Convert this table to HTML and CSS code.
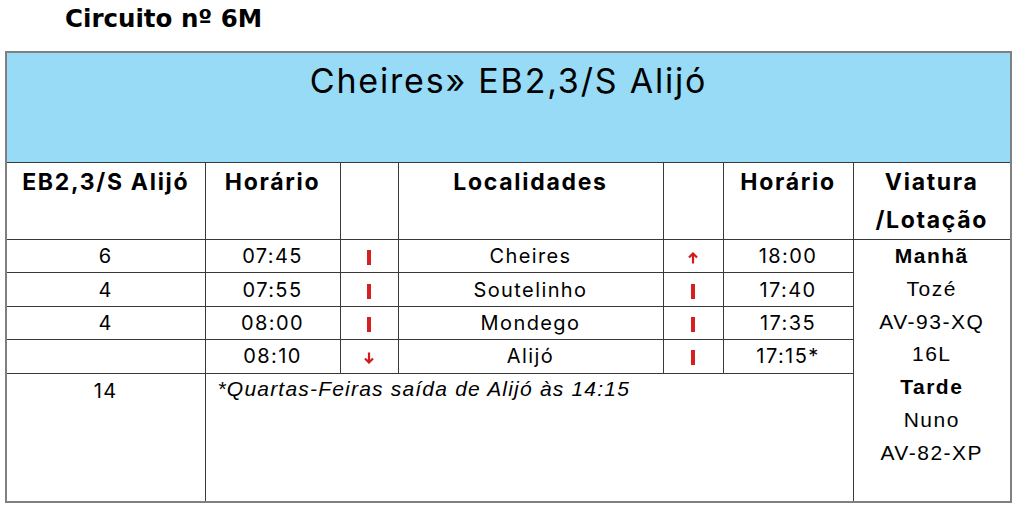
FILE: index.html
```html
<!DOCTYPE html>
<html lang="pt">
<head>
<meta charset="utf-8">
<title>Circuito nº 6M</title>
<link rel="stylesheet" href="styles.css">
</head>
<body>
<h1 class="circuit">Circuito nº 6M</h1>
<table class="route">
  <colgroup>
    <col class="c1"><col class="c2"><col class="c3"><col class="c4"><col class="c5"><col class="c6"><col class="c7">
  </colgroup>
  <tr class="title-row">
    <td colspan="7" class="title-cell">Cheires» EB2,3/S Alijó</td>
  </tr>
  <tr class="head-row">
    <th>EB2,3/S Alijó</th>
    <th>Horário</th>
    <th></th>
    <th>Localidades</th>
    <th></th>
    <th>Horário</th>
    <th>Viatura<br>/Lotação</th>
  </tr>
  <tr class="data-row">
    <td>6</td>
    <td>07:45</td>
    <td><span class="bar"></span></td>
    <td>Cheires</td>
    <td><svg class="arrow" viewBox="0 0 10 12" width="10" height="12"><path d="M5 11.5V1.5M1 5.5L5 1.5L9 5.5" fill="none" stroke="#d01c1c" stroke-width="2.2"/></svg></td>
    <td>18:00</td>
    <td rowspan="5" class="vehicle">
      <b>Manhã</b><br>Tozé<br>AV-93-XQ<br>16L<br><b>Tarde</b><br>Nuno<br>AV-82-XP
    </td>
  </tr>
  <tr class="data-row">
    <td>4</td>
    <td>07:55</td>
    <td><span class="bar"></span></td>
    <td>Soutelinho</td>
    <td><span class="bar"></span></td>
    <td>17:40</td>
  </tr>
  <tr class="data-row">
    <td>4</td>
    <td>08:00</td>
    <td><span class="bar"></span></td>
    <td>Mondego</td>
    <td><span class="bar"></span></td>
    <td>17:35</td>
  </tr>
  <tr class="data-row">
    <td></td>
    <td>08:10</td>
    <td><svg class="arrow" viewBox="0 0 10 12" width="10" height="12"><path d="M5 0.5V10.5M1 6.5L5 10.5L9 6.5" fill="none" stroke="#d01c1c" stroke-width="2.2"/></svg></td>
    <td>Alijó</td>
    <td><span class="bar"></span></td>
    <td>17:15*</td>
  </tr>
  <tr class="foot-row">
    <td class="total">14</td>
    <td colspan="5" class="note">*Quartas-Feiras saída de Alijó às 14:15</td>
  </tr>
</table>
</body>
</html>
```
FILE: styles.css
```css
html, body {
  margin: 0;
  padding: 0;
  background: #ffffff;
}
body {
  width: 1016px;
  height: 507px;
  overflow: hidden;
  color: #000;
  font-family: Inter, "Open Sans", sans-serif;
}
.circuit {
  margin: 0;
  padding: 5px 0 0 65px;
  height: 51px;
  box-sizing: border-box;
  font-family: "DejaVu Sans", sans-serif;
  font-weight: bold;
  font-size: 24.5px;
  line-height: 28px;
}
.route {
  margin-left: 5px;
  width: 1005px;
  border-collapse: collapse;
  table-layout: fixed;
  border: 2px solid #808080;
}
.c1 { width: 199px; }
.c2 { width: 135px; }
.c3 { width: 58px; }
.c4 { width: 265px; }
.c5 { width: 60px; }
.c6 { width: 130px; }
.c7 { width: 158px; }
.route td, .route th {
  border: 1px solid #3a3a3a;
  padding: 0;
  text-align: center;
}
.title-cell {
  background: #97dbf7;
  height: 109px;
  vertical-align: top;
  font-size: 34px;
  letter-spacing: 1.8px;
  line-height: 56px;
}
.head-row th {
  height: 75.5px;
  vertical-align: top;
  font-weight: 700;
  font-size: 23px;
  letter-spacing: 1.7px;
  line-height: 38px;
}
.data-row td {
  height: 32.4px;
  font-size: 20px;
  letter-spacing: 1.4px;
  line-height: 32px;
  vertical-align: middle;
}
.bar {
  display: inline-block;
  width: 4px;
  height: 15px;
  background: #d42020;
  vertical-align: middle;
}
.arrow {
  display: inline-block;
  vertical-align: middle;
}
.route td.vehicle {
  vertical-align: top;
  font-family: "Liberation Sans", Arial, sans-serif;
  font-size: 21px;
  letter-spacing: 1.5px;
  line-height: 32.8px;
}
.foot-row td {
  height: 127px;
  vertical-align: top;
  font-size: 20px;
  letter-spacing: 1.4px;
  line-height: 34px;
}
.route td.note {
  text-align: left;
  padding-left: 12px;
  font-family: "Liberation Sans", Arial, sans-serif;
  font-style: italic;
  font-size: 21px;
  letter-spacing: 1.2px;
  line-height: 30px;
}
```
